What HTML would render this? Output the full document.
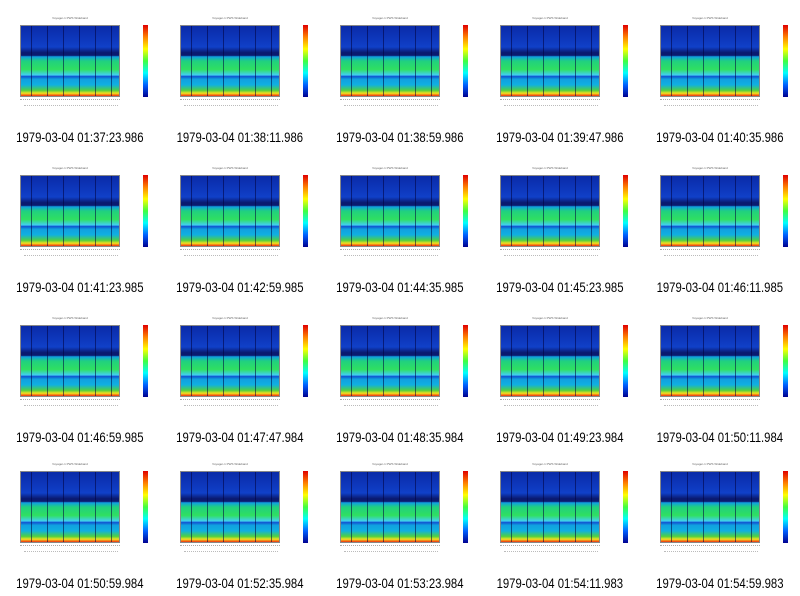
<!DOCTYPE html>
<html><head><style>
body{margin:0;width:800px;height:596px;background:#fff;position:relative;overflow:hidden;font-family:"Liberation Sans",sans-serif}
.c{position:absolute;width:160px;height:150px}
.t{position:absolute;left:30px;top:16px;font-size:3px;color:#666;width:80px;text-align:center}
.p{position:absolute;left:20px;top:25px;width:100px;height:72px;border:1px solid #888;box-sizing:border-box;
background:
repeating-linear-gradient(90deg,transparent 0 10px,rgba(0,0,60,.55) 10px 11px,transparent 11px 16px),
linear-gradient(180deg,#0a2aa8 0%,#1040c8 30%,#0a1a70 38%,#0a1a70 42%,#10a0e0 44%,#20d080 50%,#30e060 62%,#40d0f0 70%,#1050d0 72%,#10a0e0 76%,#10b0e0 84%,#50d040 92%,#f0e020 96%,#f03010 100%)}
.x{position:absolute;left:20px;top:99px;width:100px;height:2px;border-top:1px dotted #aaa}
.x2{position:absolute;left:24px;top:105px;width:94px;height:0;border-top:1px dotted #bbb}
.cb{position:absolute;left:143px;top:25px;width:5px;height:72px;background:linear-gradient(180deg,#e00000,#ff8000,#ffff00,#40ff40,#00ffff,#0060ff,#000090)}
.l{position:absolute;left:0;top:130px;width:160px;text-align:center;font-size:13.5px;color:#000;transform:scaleX(0.84);transform-origin:79px 0}
</style></head><body>
<div class="c" style="left:0;top:0"><div class="t">Voyager-1 PWS Wideband</div><div class="p"></div><div class="x"></div><div class="x2"></div><div class="cb"></div><div class="l">1979-03-04 01:37:23.986</div></div>
<div class="c" style="left:160px;top:0"><div class="t">Voyager-1 PWS Wideband</div><div class="p"></div><div class="x"></div><div class="x2"></div><div class="cb"></div><div class="l">1979-03-04 01:38:11.986</div></div>
<div class="c" style="left:320px;top:0"><div class="t">Voyager-1 PWS Wideband</div><div class="p"></div><div class="x"></div><div class="x2"></div><div class="cb"></div><div class="l">1979-03-04 01:38:59.986</div></div>
<div class="c" style="left:480px;top:0"><div class="t">Voyager-1 PWS Wideband</div><div class="p"></div><div class="x"></div><div class="x2"></div><div class="cb"></div><div class="l">1979-03-04 01:39:47.986</div></div>
<div class="c" style="left:640px;top:0"><div class="t">Voyager-1 PWS Wideband</div><div class="p"></div><div class="x"></div><div class="x2"></div><div class="cb"></div><div class="l">1979-03-04 01:40:35.986</div></div>
<div class="c" style="left:0;top:150px"><div class="t">Voyager-1 PWS Wideband</div><div class="p"></div><div class="x"></div><div class="x2"></div><div class="cb"></div><div class="l">1979-03-04 01:41:23.985</div></div>
<div class="c" style="left:160px;top:150px"><div class="t">Voyager-1 PWS Wideband</div><div class="p"></div><div class="x"></div><div class="x2"></div><div class="cb"></div><div class="l">1979-03-04 01:42:59.985</div></div>
<div class="c" style="left:320px;top:150px"><div class="t">Voyager-1 PWS Wideband</div><div class="p"></div><div class="x"></div><div class="x2"></div><div class="cb"></div><div class="l">1979-03-04 01:44:35.985</div></div>
<div class="c" style="left:480px;top:150px"><div class="t">Voyager-1 PWS Wideband</div><div class="p"></div><div class="x"></div><div class="x2"></div><div class="cb"></div><div class="l">1979-03-04 01:45:23.985</div></div>
<div class="c" style="left:640px;top:150px"><div class="t">Voyager-1 PWS Wideband</div><div class="p"></div><div class="x"></div><div class="x2"></div><div class="cb"></div><div class="l">1979-03-04 01:46:11.985</div></div>
<div class="c" style="left:0;top:300px"><div class="t">Voyager-1 PWS Wideband</div><div class="p"></div><div class="x"></div><div class="x2"></div><div class="cb"></div><div class="l">1979-03-04 01:46:59.985</div></div>
<div class="c" style="left:160px;top:300px"><div class="t">Voyager-1 PWS Wideband</div><div class="p"></div><div class="x"></div><div class="x2"></div><div class="cb"></div><div class="l">1979-03-04 01:47:47.984</div></div>
<div class="c" style="left:320px;top:300px"><div class="t">Voyager-1 PWS Wideband</div><div class="p"></div><div class="x"></div><div class="x2"></div><div class="cb"></div><div class="l">1979-03-04 01:48:35.984</div></div>
<div class="c" style="left:480px;top:300px"><div class="t">Voyager-1 PWS Wideband</div><div class="p"></div><div class="x"></div><div class="x2"></div><div class="cb"></div><div class="l">1979-03-04 01:49:23.984</div></div>
<div class="c" style="left:640px;top:300px"><div class="t">Voyager-1 PWS Wideband</div><div class="p"></div><div class="x"></div><div class="x2"></div><div class="cb"></div><div class="l">1979-03-04 01:50:11.984</div></div>
<div class="c" style="left:0;top:446px"><div class="t">Voyager-1 PWS Wideband</div><div class="p"></div><div class="x"></div><div class="x2"></div><div class="cb"></div><div class="l">1979-03-04 01:50:59.984</div></div>
<div class="c" style="left:160px;top:446px"><div class="t">Voyager-1 PWS Wideband</div><div class="p"></div><div class="x"></div><div class="x2"></div><div class="cb"></div><div class="l">1979-03-04 01:52:35.984</div></div>
<div class="c" style="left:320px;top:446px"><div class="t">Voyager-1 PWS Wideband</div><div class="p"></div><div class="x"></div><div class="x2"></div><div class="cb"></div><div class="l">1979-03-04 01:53:23.984</div></div>
<div class="c" style="left:480px;top:446px"><div class="t">Voyager-1 PWS Wideband</div><div class="p"></div><div class="x"></div><div class="x2"></div><div class="cb"></div><div class="l">1979-03-04 01:54:11.983</div></div>
<div class="c" style="left:640px;top:446px"><div class="t">Voyager-1 PWS Wideband</div><div class="p"></div><div class="x"></div><div class="x2"></div><div class="cb"></div><div class="l">1979-03-04 01:54:59.983</div></div>
</body></html>
